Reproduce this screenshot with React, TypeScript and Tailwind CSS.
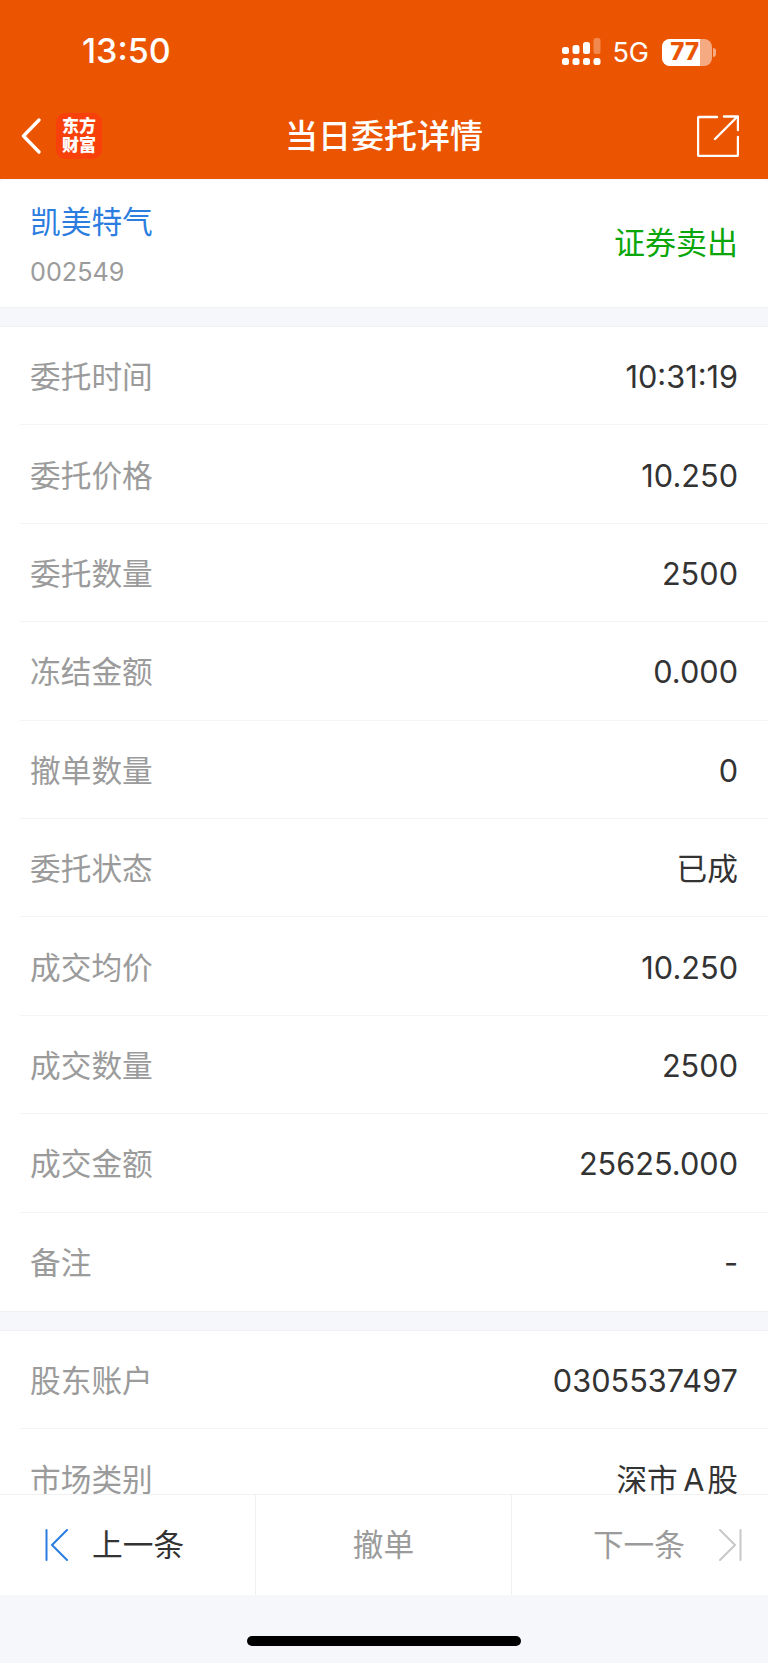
import React from "react";

const font = { fontFamily: '"Inter", "Noto Sans CJK SC", sans-serif' };

const orderRows = [
  ["委托时间", "10:31:19"],
  ["委托价格", "10.250"],
  ["委托数量", "2500"],
  ["冻结金额", "0.000"],
  ["撤单数量", "0"],
  ["委托状态", "已成"],
  ["成交均价", "10.250"],
  ["成交数量", "2500"],
  ["成交金额", "25625.000"],
  ["备注", "-"],
];

const accountRows = [
  ["股东账户", "0305537497"],
  ["市场类别", "深市\u2009A\u200a股"],
];

function SignalIcon() {
  return (
    <svg width="39" height="28" viewBox="0 0 39 28" fill="#fff">
      <rect x="0" y="9" width="7" height="7" rx="2.5" />
      <rect x="10.5" y="7" width="7" height="9" rx="2.5" />
      <rect x="21" y="4" width="7" height="12" rx="2.5" />
      <rect x="31.5" y="0" width="7" height="16" rx="2.5" fillOpacity="0.3" />
      <rect x="0" y="20" width="7" height="7" rx="2.5" />
      <rect x="10.5" y="20" width="7" height="7" rx="2.5" />
      <rect x="21" y="20" width="7" height="7" rx="2.5" />
      <rect x="31.5" y="20" width="7" height="7" rx="2.5" />
    </svg>
  );
}

function Battery() {
  return (
    <div className="flex items-center gap-[1px]">
      <div className="flex h-[27px] w-[50px] rounded-[8px] bg-white/50">
        <div className="flex h-full w-[38px] items-center justify-end rounded-l-[8px] bg-white pr-[1px] text-[24px] font-extrabold leading-none text-[#eb5502]">
          77
        </div>
      </div>
      <div className="h-[9px] w-[3px] rounded-r-full bg-white/50" />
    </div>
  );
}

function Row({ label, value }: { label: string; value: string }) {
  return (
    <div className="ml-[20px] flex h-[98.4px] shrink-0 items-center justify-between border-b border-[#f3f4f6] pl-[10px] pr-[30px] pt-[3px] last:border-b-0">
      <span className="text-[30.7px] text-[#9b9b9b]">{label}</span>
      <span className="text-[30.7px] text-[#333]">{value}</span>
    </div>
  );
}

export default function App() {
  return (
    <div style={font} className="flex h-[1663px] w-[768px] flex-col overflow-hidden bg-[#f5f7fa]">
      <header className="h-[179px] shrink-0 bg-[#eb5502] text-white">
        {/* status bar */}
        <div className="flex h-[102px] items-start justify-between pl-[82px] pr-[52px] pt-[31px]">
          <span className="text-[34px] font-medium leading-[40px]">13:50</span>
          <div className="flex items-center pt-[7px]">
            <SignalIcon />
            <span className="ml-[11px] mr-[13px] text-[27px] leading-none">5G</span>
            <Battery />
          </div>
        </div>

        {/* nav */}
        <div className="grid h-[68px] grid-cols-[1fr_auto_1fr] items-center px-[21px]">
          <div className="flex items-center">
            <svg width="20" height="36" viewBox="0 0 20 36" fill="none" stroke="#fff" strokeWidth="3.4" strokeLinecap="round" strokeLinejoin="round">
              <path d="M18 2 L2.5 18 L18 34" />
            </svg>
            <div className="ml-[15px] flex h-[46px] w-[46px] flex-col items-center justify-center rounded-[9px] bg-[#f8400a] text-[17px] font-black leading-[19px]">
              <span>东方</span>
              <span>财富</span>
            </div>
          </div>
          <h1 className="text-[33px] font-medium leading-none">当日委托详情</h1>
          <svg className="mr-[8px] justify-self-end" width="42" height="42" viewBox="0 0 42 42" fill="none" stroke="#fff" strokeWidth="2.4" strokeLinecap="round" strokeLinejoin="round">
            <path d="M20 2 H2.5 a1.5 1.5 0 0 0 -1.5 1.5 V39.5 a1.5 1.5 0 0 0 1.5 1.5 H39.5 a1.5 1.5 0 0 0 1.5 -1.5 V22" />
            <path d="M18 24 L40 2 M27 1.5 H41 V15" />
          </svg>
        </div>
      </header>

      <main className="min-h-0 flex-1 overflow-hidden">
        {/* stock summary */}
        <section className="mt-[1px] flex h-[128px] items-center justify-between rounded-t-[4px] border-b border-[#f0f1f3] bg-white px-[30px]">
          <div className="pt-[2px]">
            <div className="text-[30.7px] leading-[42px] text-[#2b7de0]">凯美特气</div>
            <div className="mt-[13px] text-[25.2px] leading-[32px] text-[#9b9b9b]">002549</div>
          </div>
          <span className="text-[31px] text-[#0aa60a]">证券卖出</span>
        </section>

        <section className="mt-[18px] border-y border-[#f0f1f3] bg-white">
          {orderRows.map(([label, value]) => (
            <Row key={label} label={label} value={value} />
          ))}
        </section>

        <section className="mt-[18px] border-t border-[#f0f1f3] bg-white">
          {accountRows.map(([label, value]) => (
            <Row key={label} label={label} value={value} />
          ))}
        </section>
      </main>

      {/* prev / cancel / next */}
      <footer className="grid h-[101px] shrink-0 grid-cols-3 border-t border-[#f0f1f3] bg-white text-[30.7px]">
        <div className="flex items-center border-r border-[#f0f1f3] pl-[45px]">
          <svg width="24" height="32" viewBox="0 0 24 32" fill="none" stroke="#2b7de0" strokeWidth="2" strokeLinecap="round" strokeLinejoin="round">
            <path d="M1.5 1 V31 M22 1 L7 16 L22 31" />
          </svg>
          <span className="ml-[23px] text-[#333]">上一条</span>
        </div>
        <div className="flex items-center justify-center border-r border-[#f0f1f3] text-[#9b9b9b]">撤单</div>
        <div className="flex items-center justify-end pr-[26px]">
          <span className="mr-[33px] text-[#9b9b9b]">下一条</span>
          <svg width="24" height="32" viewBox="0 0 24 32" fill="none" stroke="#c8c8c8" strokeWidth="2" strokeLinecap="round" strokeLinejoin="round">
            <path d="M22.5 1 V31 M2 1 L17 16 L2 31" />
          </svg>
        </div>
      </footer>

      {/* home indicator */}
      <div className="flex h-[68px] shrink-0 justify-center pt-[41px]">
        <div className="h-[10px] w-[274px] rounded-full bg-black" />
      </div>
    </div>
  );
}
